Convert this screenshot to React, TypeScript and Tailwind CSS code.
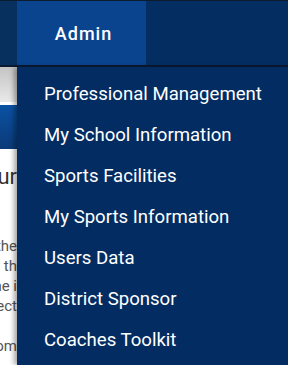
const adminLinks = [
  'Professional Management',
  'My School Information',
  'Sports Facilities',
  'My Sports Information',
  'Users Data',
  'District Sponsor',
  'Coaches Toolkit',
]

const bodyLines = ['the', 'in th', 'the i', 'select', '', 'from']

export default function App() {
  return (
    <div className="relative w-[288px] h-[365px] overflow-hidden bg-white font-['Roboto',sans-serif]">
      {/* Top nav */}
      <header className="flex h-[67px] border-t border-[#0d1b2e] border-b-2 border-b-[#0b1a33] bg-[#042e62]">
        <div className="w-[17px] bg-[#07305f]" />
        <button className="w-[129px] flex items-center justify-center pl-1 bg-[#0a448e] text-white text-[18px] font-medium tracking-[1px]">
          Admin
        </button>
      </header>

      {/* Page underneath */}
      <main className="w-[17px]">
        <div className="h-[35px] bg-gradient-to-b from-[#c4c4c4] to-[#e9e9e9]" />
        <div className="mt-[3px] h-[44px] bg-gradient-to-b from-[#0a52a3] to-[#0b3a78]" />
        <div className="mt-[13px] flex justify-end whitespace-nowrap text-[22px] leading-[30px] text-[#333]">
          Your
        </div>
        <div className="mt-[44px] flex flex-col text-[15px] leading-[20px] text-[#555]">
          {bodyLines.map((line, i) => (
            <div key={i} className="flex justify-end whitespace-nowrap h-[20px]">
              {line}
            </div>
          ))}
        </div>
      </main>

      {/* Admin dropdown */}
      <nav className="absolute left-[17px] right-0 top-[67px] bottom-0 bg-[#032d62] pt-[7px] shadow-[-3px_0_5px_rgba(0,0,0,0.35)]">
        <ul>
          {adminLinks.map(link => (
            <li key={link}>
              <a href="#" className="flex items-center h-[41px] pl-[27px] text-white text-[18.6px]">
                {link}
              </a>
            </li>
          ))}
        </ul>
      </nav>
    </div>
  )
}
